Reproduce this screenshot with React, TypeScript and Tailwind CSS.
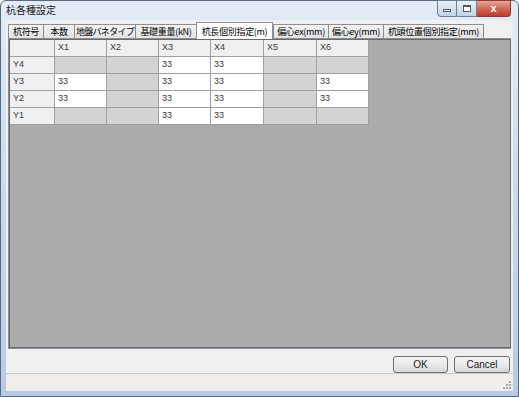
import React from "react";

const tabs = [
  { label: "杭符号", w: 36 },
  { label: "本数", w: 32 },
  { label: "地盤バネタイプ", w: 62, tight: true },
  { label: "基礎重量(kN)", w: 62 },
  { label: "杭長個別指定(m)", w: 77, active: true },
  { label: "偏心ex(mm)", w: 56 },
  { label: "偏心ey(mm)", w: 56 },
  { label: "杭頭位置個別指定(mm)", w: 101 },
];

const colW = [52, 52, 52, 53, 53, 52];
const cols = ["X1", "X2", "X3", "X4", "X5", "X6"];
const rows: { name: string; cells: (string | null)[] }[] = [
  { name: "Y4", cells: [null, null, "33", "33", null, null] },
  { name: "Y3", cells: ["33", null, "33", "33", null, "33"] },
  { name: "Y2", cells: ["33", null, "33", "33", null, "33"] },
  { name: "Y1", cells: [null, null, "33", "33", null, null] },
];

export default function App() {
  return (
    <div className="w-[519px] h-[397px] overflow-hidden bg-white">
      <div className="relative w-[519px] h-[397px] rounded-t-[6px] border border-[#5a6a7c] bg-gradient-to-b from-[#e3ecf6] via-[#c8daed] to-[#b6cce4] flex flex-col font-['Noto_Sans_CJK_JP',sans-serif]">
        {/* title bar */}
        <div className="h-[19px] flex items-start relative">
          <div className="pl-[5px] pt-[3px] text-[10px] leading-[12px] text-[#1a1a1a]">杭各種設定</div>
          <div className="absolute right-[7px] top-[-1px] flex">
            <div className="w-[20px] h-[17px] border border-[#6d7f95] rounded-bl-[4px] bg-gradient-to-b from-[#e9f0f8] to-[#c3d3e6] flex items-center justify-center">
              <div className="w-[8px] h-[3px] border border-[#4f5a66] bg-white mt-[4px]" />
            </div>
            <div className="w-[20px] h-[17px] border-y border-r border-[#6d7f95] bg-gradient-to-b from-[#e9f0f8] to-[#c3d3e6] flex items-center justify-center">
              <div className="w-[8px] h-[7px] border border-[#4f5a66] border-t-2 bg-white" />
            </div>
            <div className="w-[34px] h-[17px] border-y border-r border-[#8a3a32] rounded-br-[4px] bg-gradient-to-b from-[#e8a597] via-[#d16a56] to-[#c0392b] flex items-center justify-center text-white text-[11px] font-bold leading-none font-['Liberation_Sans',sans-serif]">
              x
            </div>
          </div>
        </div>

        {/* client */}
        <div className="mx-[5px] flex-1 bg-[#f0f0f0] flex flex-col mb-[5px]">
          {/* tab control */}
          <div className="pl-[2px] pr-[2px] pt-[1px] flex flex-col">
            <div className="flex items-end h-[17px]">
              {tabs.map((t) =>
                t.active ? (
                  <div
                    key={t.label}
                    style={{ width: t.w }}
                    className="h-[17px] border-x border-t border-[#8c8e94] bg-white relative z-10 mb-[-1px] flex items-center justify-center text-[9px] tracking-[-0.3px] leading-none text-black whitespace-nowrap"
                  >
                    {t.label}
                  </div>
                ) : (
                  <div
                    key={t.label}
                    style={{ width: t.w }}
                    className={
                      "h-[14px] border-t border-l border-r border-[#8c8e94] -mr-px bg-gradient-to-b from-[#f3f3f3] to-[#e2e2e2] flex items-center justify-center text-[9px] leading-none text-black whitespace-nowrap " +
                      (t.tight ? "tracking-[-0.7px]" : "tracking-[-0.3px]")
                    }
                  >
                    {t.label}
                  </div>
                )
              )}
            </div>
            {/* tab page */}
            <div className="h-[311px] border border-[#8c8e94] bg-white p-0">
              <div className="h-full border border-[#666a70] bg-[#ababab] -m-px ml-0 mt-0">
                <div className="flex flex-col font-['Liberation_Sans',sans-serif] text-[9px] text-[#3a3a3a]">
                  {/* header row */}
                  <div className="flex h-[17px]">
                    <div className="w-[45px] h-[17px] bg-[#f0f0f0] border-r border-b border-[#a0a0a0]" />
                    {cols.map((c, i) => (
                      <div
                        key={c}
                        style={{ width: colW[i] }}
                        className="h-[17px] bg-[#f0f0f0] border-r border-b border-[#a0a0a0] pl-[3px] flex items-center"
                      >
                        {c}
                      </div>
                    ))}
                  </div>
                  {rows.map((r) => (
                    <div key={r.name} className="flex h-[17px]">
                      <div className="w-[45px] h-[17px] bg-[#f0f0f0] border-r border-b border-[#a0a0a0] pl-[3px] flex items-center">
                        {r.name}
                      </div>
                      {r.cells.map((v, i) => (
                        <div
                          key={i}
                          style={{ width: colW[i] }}
                          className={
                            "h-[17px] border-r border-b border-[#a0a0a0] pl-[3px] flex items-center " +
                            (v === null ? "bg-[#d3d3d3]" : "bg-white")
                          }
                        >
                          {v ?? ""}
                        </div>
                      ))}
                    </div>
                  ))}
                </div>
              </div>
            </div>
          </div>

          {/* buttons */}
          <div className="h-[24px] flex justify-end items-start pt-[7px] pr-[3px] gap-[6px]">
            <button className="w-[55px] h-[17px] rounded-[3px] border border-[#707070] bg-gradient-to-b from-[#f3f3f3] via-[#ebebeb] to-[#d6d6d6] text-[10px] leading-none text-[#1a1a1a] font-['Liberation_Sans',sans-serif]">
              OK
            </button>
            <button className="w-[56px] h-[17px] rounded-[3px] border border-[#707070] bg-gradient-to-b from-[#f3f3f3] via-[#ebebeb] to-[#d6d6d6] text-[10px] leading-none text-[#1a1a1a] font-['Liberation_Sans',sans-serif]">
              Cancel
            </button>
          </div>

          {/* status bar */}
          <div className="flex-1 border-t border-[#c9c9c9] bg-[#f1eded] flex justify-end items-end pr-[2px] pb-[2px]">
            <svg width="8" height="8" viewBox="0 0 8 8">
              {[
                [6, 0],
                [3, 3],
                [6, 3],
                [0, 6],
                [3, 6],
                [6, 6],
              ].map(([x, y], i) => (
                <rect key={i} x={x} y={y} width="2" height="2" fill="#a8a8a8" />
              ))}
            </svg>
          </div>
        </div>
      </div>
    </div>
  );
}
